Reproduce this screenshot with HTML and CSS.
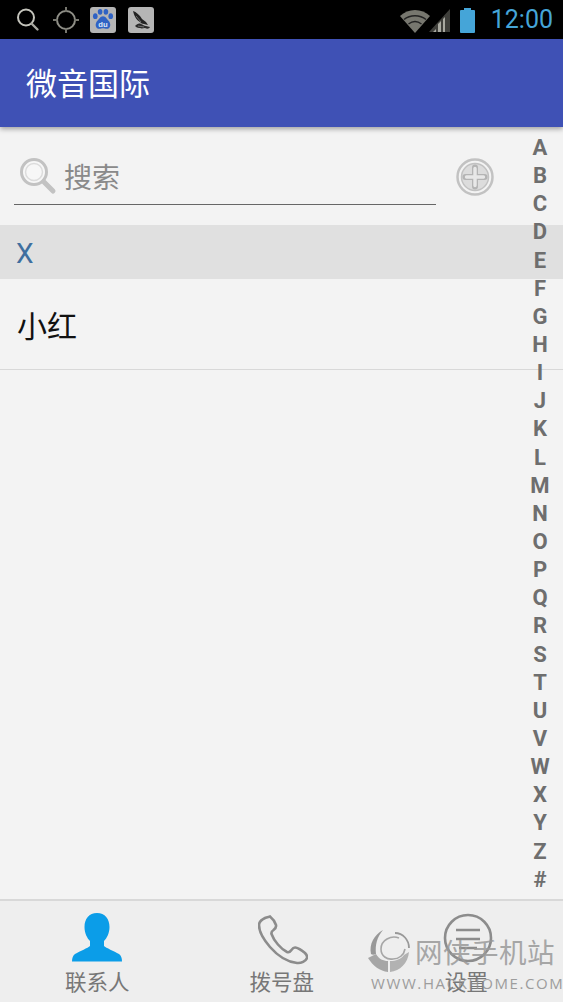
FILE: index.html
```html
<!DOCTYPE html>
<html lang="zh-CN">
<head>
    <meta charset="UTF-8">
    <meta name="viewport" content="width=device-width, initial-scale=1.0">
    <title>微音国际</title>
    <link rel="stylesheet" href="styles.css">
</head>
<body>
    <div class="app">
        <div class="status-bar">
            <div class="status-left">
                <svg class="st-search" width="26" height="26" viewBox="0 0 26 26"><circle cx="11" cy="10.500" r="8" fill="none" stroke="#c4c4bc" stroke-width="2"/><path d="M16.500 16.500l6 6" stroke="#a8a8a0" stroke-width="2.400" stroke-linecap="round"/></svg>
                <svg class="st-gps" width="28" height="28" viewBox="0 0 28 28"><circle cx="14" cy="14" r="9" fill="none" stroke="#8f8f87" stroke-width="2"/><path d="M14 1v5M14 22v5M1 14h5M22 14h5" stroke="#77776f" stroke-width="2"/></svg>
                <div class="st-app st-baidu">
                    <svg width="27" height="27" viewBox="0 0 27 27"><g fill="#2f62c4"><ellipse cx="5.500" cy="10" rx="2.400" ry="3"/><ellipse cx="10.500" cy="5.500" rx="2.400" ry="3"/><ellipse cx="16.500" cy="5.500" rx="2.400" ry="3"/><ellipse cx="21.500" cy="10" rx="2.400" ry="3"/><path d="M13.500 10c3 0 4 3 6 5s2.500 7-1 8c-2 .5-3.500-.5-5-.5s-3 1-5 .5c-3.500-1-3-6-1-8s3-5 6-5z"/></g><text x="13.500" y="21" class="du">du</text></svg>
                </div>
                <div class="st-app st-bird">
                    <svg width="26" height="26" viewBox="0 0 26 26"><path d="M5 4c3 1 7 4 9 8l4 3 2 3-4-1c-2 0-3-1-4-2C8 13 6 8 5 4z" fill="#222"/><path d="M7 19c2-2 4-3 6-2 2 .5 3 2 5 2l4 1c-1 2-3 2-5 1-2 0-3 1-5 0-1 0-3 0-5-2z" fill="#2a2a2a"/><path d="M10 19l6 1M8 9l5 6" stroke="#8c8c8c" stroke-width=".7" fill="none"/></svg>
                </div>
            </div>
            <div class="status-right">
                <svg class="st-wifi" width="32" height="26" viewBox="0 0 32 26"><path d="M1 9C9 1 23 1 31 9L16 26z" fill="#77776f"/><path d="M5 12.500c6-5 16-5 22 0M9.500 17c4-3 9-3 13 0" fill="none" stroke="#222" stroke-width="1.500"/></svg>
                <svg class="st-signal" width="22" height="26" viewBox="0 0 22 26"><path d="M0 25L21 2v23z" fill="#3f3f3b"/><path d="M4 25l3-3v3zM9 25v-8l3-3v11zM14 25V12l2-2v15z" fill="#a8a8a0"/></svg>
                <svg class="st-battery" width="17" height="26" viewBox="0 0 17 26"><path d="M5 1h7v2h3a1 1 0 0 1 1 1v21a1 1 0 0 1-1 1H2a1 1 0 0 1-1-1V4a1 1 0 0 1 1-1h3z" fill="#45a5d8"/></svg>
                <span class="clock">12:00</span>
            </div>
        </div>

        <header class="app-bar">
            <h1>微音国际</h1>
        </header>

        <main class="content">
            <div class="search-row">
                <div class="search-box">
                    <svg class="search-icon" width="40" height="40" viewBox="0 0 40 40"><circle cx="16" cy="16" r="12.500" fill="#f7f7f7" stroke="#c2c2c2" stroke-width="3"/><circle cx="16" cy="16" r="8.500" fill="none" stroke="#dcdcdc" stroke-width="1.500"/><path d="M26 26l9 9" stroke="#c2c2c2" stroke-width="5" stroke-linecap="round"/></svg>
                    <span class="search-text">搜索</span>
                </div>
                <svg class="add-icon" width="38" height="38" viewBox="0 0 38 38"><circle cx="19" cy="19" r="17.500" fill="none" stroke="#c2c2c2" stroke-width="2.500"/><circle cx="19" cy="19" r="13.500" fill="#dcdcdc" stroke="#c2c2c2" stroke-width="1.500"/><path d="M19 9.500v19M9.500 19h19" stroke="#b4b4b4" stroke-width="6" stroke-linecap="round"/><path d="M19 10.500v17M10.500 19h17" stroke="#e8e8e8" stroke-width="3.400" stroke-linecap="round"/></svg>
            </div>
            <div class="section-head">X</div>
            <div class="contact-row">小红</div>
        </main>

        <nav class="index-bar">
            <span>A</span><span>B</span><span>C</span><span>D</span><span>E</span><span>F</span><span>G</span><span>H</span><span>I</span><span>J</span><span>K</span><span>L</span><span>M</span><span>N</span><span>O</span><span>P</span><span>Q</span><span>R</span><span>S</span><span>T</span><span>U</span><span>V</span><span>W</span><span>X</span><span>Y</span><span>Z</span><span>#</span>
        </nav>

        <footer class="tab-bar">
            <div class="tab tab-active">
                <svg width="54" height="50" viewBox="0 0 54 50"><path d="M27 1c8 0 12.500 6 12.500 14 0 6-2.500 11-5.500 14v5c2 2 10 5 15 8 2 1.500 3 4 3 7.500H2c0-3.500 1-6 3-7.500 5-3 13-6 15-8v-5c-3-3-5.500-8-5.500-14C14.500 7 19 1 27 1z" fill="#0b9de8"/></svg>
                <span>联系人</span>
            </div>
            <div class="tab">
                <svg class="phone-icon" width="50" height="50" viewBox="2 0 50 50"><path d="M9 3c-3 1.500-6 4-6 7 0 7 5 15 11 22 7 8 17 15 27 16 4 .5 9-2 10-5 .5-2-.5-3.500-2-5-3-2.500-7-5-9.500-5.500-2-.5-3 1-4.500 3-1 1.500-2.500 2-4 1.500-6-3-13-11-15.500-18-.5-2 .5-3 2-4 2-1.500 3-3 2.500-5-1-3-3.500-6.500-6-8.500C12.500 2 11 2 9 3z" fill="none" stroke="#8c8c8c" stroke-width="2.600"/></svg>
                <span>拨号盘</span>
            </div>
            <div class="tab">
                <svg class="set-icon" width="50" height="50" viewBox="0 0 50 50"><circle cx="25" cy="25" r="23" fill="none" stroke="#8c8c8c" stroke-width="2.600"/><path d="M13 17h24M13 26h24M16 35h18" stroke="#8c8c8c" stroke-width="2.600"/></svg>
                <span>设置</span>
            </div>
        </footer>

        <!-- watermark sits over the tab bar -->
        <div class="watermark">
            <svg class="wm-logo" width="42" height="44" viewBox="0 0 42 44"><path d="M15 0C6 5 1 14 3 24c1 1 3 1 5 0C7 15 9 7 15 0z" fill="#8a8a8a"/><path d="M0 28l8-4c3 5 7 7 12 7v11C12 41 5 36 0 28z" fill="#9a9a9a"/><path d="M22 42V31c6 0 11-2 14-6l5-3c-1 11-9 19-19 20z" fill="#a8a8a8"/><path d="M31 8c-8-3-18 2-18 11 0 7 6 11 12 10 6 0 11-4 12-10" fill="none" stroke="#9a9a9a" stroke-width="1.600"/><path d="M27 3c8 0 14 7 14 15" fill="none" stroke="#8a8a8a" stroke-width="1.800"/></svg>
            <div class="wm-text">
                <div class="wm-cn">网侠手机站</div>
                <div class="wm-en">WWW.HACKHOME.COM</div>
            </div>
        </div>
    </div>
</body>
</html>
```

FILE: styles.css
```css
html, body {
    margin: 0;
    padding: 0;
}

body {
    font-family: "Roboto", "Noto Sans CJK SC", sans-serif;
    background-color: #f3f3f3;
}

.app {
    position: relative;
    width: 563px;
    height: 1002px;
    display: flex;
    flex-direction: column;
    overflow: hidden;
}

/* Status bar */
.status-bar {
    height: 39px;
    flex: none;
    background-color: #000;
    display: flex;
    justify-content: space-between;
    align-items: center;
}

.status-left {
    display: flex;
    align-items: center;
    padding-left: 15px;
}

.st-gps {
    margin-left: 11px;
}

.st-app {
    width: 26px;
    height: 26px;
    border-radius: 3px;
    display: flex;
    align-items: center;
    justify-content: center;
    background-color: #b5b5b5;
}

.st-baidu {
    margin-left: 10px;
}

.st-bird {
    margin-left: 12px;
}

.du {
    font-family: "Liberation Sans", sans-serif;
    font-size: 8px;
    font-weight: bold;
    fill: #dfe7f5;
    text-anchor: middle;
}

.status-right {
    display: flex;
    align-items: center;
    padding-right: 10px;
}

.st-wifi {
    margin-right: -1px;
}

.st-signal {
    margin-left: -1px;
}

.st-battery {
    margin-left: 8px;
}

.clock {
    margin-left: 15px;
    font-size: 25px;
    color: #45a5d8;
}

/* App bar */
.app-bar {
    height: 88px;
    flex: none;
    background-color: #3f51b5;
    display: flex;
    align-items: center;
    padding-left: 26px;
    box-shadow: 0 2px 5px rgba(0,0,0,0.35);
    z-index: 2;
}

.app-bar h1 {
    margin: 0 0 4px;
    font-size: 31px;
    font-weight: 400;
    color: #fff;
}

/* Contact list */
.content {
    flex: 1;
    background-color: #f3f3f3;
}

.search-row {
    height: 98px;
    display: flex;
    padding: 0 0 0 14px;
}

.search-box {
    width: 422px;
    height: 78px;
    box-sizing: border-box;
    border-bottom: 1px solid #666;
    display: flex;
    align-items: center;
    padding: 20px 0 0 4px;
}

.search-icon {
    flex: none;
}

.search-text {
    margin-left: 6px;
    font-size: 28px;
    color: #8a8a8a;
}

.add-icon {
    margin: 31px 0 0 20px;
}

.section-head {
    height: 54px;
    background-color: #e0e0e0;
    display: flex;
    align-items: center;
    padding: 2px 0 0 16px;
    box-sizing: border-box;
    font-size: 28px;
    color: #3f6f9f;
}

.contact-row {
    height: 90px;
    border-bottom: 1px solid #d8d8d8;
    display: flex;
    align-items: center;
    padding-left: 17px;
    font-size: 30px;
    color: #111;
}

/* Alphabet index */
.index-bar {
    position: absolute;
    top: 134px;
    right: -1px;
    width: 48px;
    display: flex;
    flex-direction: column;
    align-items: center;
    font-size: 22px;
    font-weight: 700;
    color: #6e6e6e;
}

.index-bar span {
    height: 28.150px;
    line-height: 28.150px;
}

/* Bottom tabs */
.tab-bar {
    height: 101px;
    flex: none;
    background-color: #eeeeee;
    border-top: 2px solid #d8d8d8;
    display: flex;
    padding-left: 5px;
}

.tab {
    width: 184.500px;
    display: flex;
    flex-direction: column;
    align-items: center;
    padding-top: 11px;
    font-size: 21.500px;
    color: #777;
}

.tab span {
    margin-top: 8px;
    line-height: 26px;
}

.phone-icon {
    margin-left: 2px;
    margin-top: 3px;
    margin-bottom: -3px;
}

.set-icon {
    margin-left: 3px;
    margin-top: 1px;
    margin-bottom: -1px;
}

/* Watermark */
.watermark {
    position: absolute;
    left: 368px;
    top: 930px;
    display: flex;
    align-items: flex-start;
    opacity: 0.85;
}

.wm-logo {
    flex: none;
}

.wm-text {
    margin-left: 5px;
}

.wm-cn {
    font-size: 27.500px;
    line-height: 32px;
    letter-spacing: 0.500px;
    color: #9a9a9a;
    margin-top: 8px;
}

.wm-en {
    margin: 3px 0 0 -44px;
    font-family: "Open Sans", sans-serif;
    font-size: 15px;
    letter-spacing: 1.600px;
    color: #8f8f8f;
    white-space: nowrap;
}
```
